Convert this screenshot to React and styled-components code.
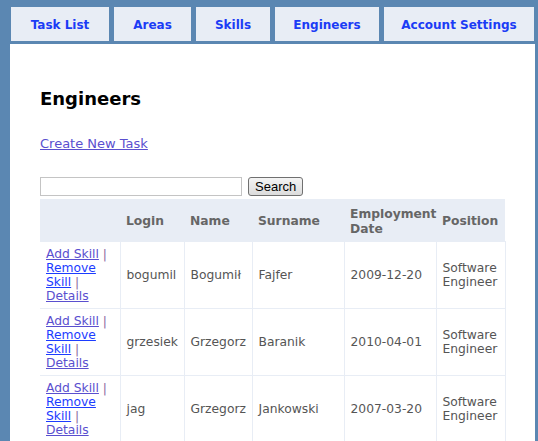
import React from "react";
import styled, {createGlobalStyle} from "styled-components";

const GlobalStyle = createGlobalStyle`
  html, body {
    margin: 0;
    padding: 0;
    background: #5b87b2;
    font-family: "DejaVu Sans", Verdana, sans-serif;
    overflow: hidden;
  }
`;

const tabs = [
    {label: "Task List", width: 98},
    {label: "Areas", width: 77},
    {label: "Skills", width: 74},
    {label: "Engineers", width: 104},
    {label: "Account Settings", width: 150},
];

const columns = [
    {label: "", width: 80},
    {label: "Login", width: 64},
    {label: "Name", width: 68},
    {label: "Surname", width: 92},
    {label: "Employment Date", width: 92},
    {label: "Position", width: 69},
];

const engineers = [
    {login: "bogumil", name: "Bogumił", surname: "Fajfer", date: "2009-12-20"},
    {login: "grzesiek", name: "Grzegorz", surname: "Baranik", date: "2010-04-01"},
    {login: "jag", name: "Grzegorz", surname: "Jankowski", date: "2007-03-20"},
];

const App = () => {
    return (
        <>
            <GlobalStyle/>
            <Nav>
                {tabs.map(t => (
                    <Tab key={t.label} href="#" $width={t.width}>{t.label}</Tab>
                ))}
            </Nav>
            <Content>
                <Title>Engineers</Title>
                <CreateLink href="#">Create New Task</CreateLink>
                <SearchRow>
                    <SearchInput type="text"/>
                    <SearchButton>Search</SearchButton>
                </SearchRow>
                <Table>
                    <colgroup>
                        {columns.map((c, i) => <col key={i} style={{width: c.width}}/>)}
                    </colgroup>
                    <thead>
                    <tr>
                        {columns.map((c, i) => <Th key={i}>{c.label}</Th>)}
                    </tr>
                    </thead>
                    <tbody>
                    {engineers.map(e => (
                        <tr key={e.login}>
                            <Td>
                                <ActionLink href="#" $visited>Add Skill</ActionLink>
                                <Sep> | </Sep>
                                <ActionLink href="#">Remove Skill</ActionLink>
                                <Sep> | </Sep>
                                <ActionLink href="#" $visited>Details</ActionLink>
                            </Td>
                            <Td>{e.login}</Td>
                            <Td>{e.name}</Td>
                            <Td>{e.surname}</Td>
                            <Td>{e.date}</Td>
                            <Td>Software Engineer</Td>
                        </tr>
                    ))}
                    </tbody>
                </Table>
            </Content>
        </>
    )
}

const Nav = styled.nav`
  display: flex;
  gap: 5px;
  padding: 7px 0 0 11px;
`;

const Tab = styled.a`
  display: flex;
  align-items: center;
  justify-content: center;
  flex: none;
  width: ${p => p.$width}px;
  height: 34px;
  padding-top: 2px;
  box-sizing: border-box;
  background: #e8edf5;
  color: #1b3cf5;
  font-size: 12px;
  font-weight: bold;
  text-decoration: none;
  white-space: nowrap;
`;

const Content = styled.div`
  margin: 3px 3px 0 10px;
  background: #fff;
  padding: 44px 30px 0 30px;
  height: 397px;
  box-sizing: border-box;
`;

const Title = styled.h2`
  margin: 0 0 24px;
  font-size: 18px;
  font-weight: bold;
  color: #000;
`;

const CreateLink = styled.a`
  display: inline-block;
  font-size: 13px;
  color: #5a4fcf;
`;

const SearchRow = styled.div`
  display: flex;
  align-items: center;
  gap: 6px;
  margin: 23px 0 2px;
  height: 22px;
`;

const SearchInput = styled.input`
  width: 202px;
  height: 19px;
  box-sizing: border-box;
  border: 1px solid #c4c4c4;
  padding: 0;
`;

const SearchButton = styled.button`
  height: 19px;
  padding: 0 6px;
  font-family: "Liberation Sans", Arial, sans-serif;
  font-size: 13px;
  border: 1px solid #707070;
  border-radius: 3px;
  background: linear-gradient(#f4f4f4, #dcdcdc);
  color: #000;
`;

const Table = styled.table`
  width: 465px;
  table-layout: fixed;
  border-collapse: collapse;
  font-size: 12.3px;
  color: #555;
`;

const Th = styled.th`
  background: #e8edf5;
  color: #666;
  font-weight: bold;
  text-align: left;
  padding: 7px 6px 3px;
  height: 42px;
  box-sizing: border-box;
  line-height: 15px;
`;

const Td = styled.td`
  border: 1px solid #e8edf5;
  padding: 4px 6px;
  height: 67px;
  box-sizing: border-box;
  line-height: 14px;
  &:first-child {
    border-left: none;
  }
`;

const ActionLink = styled.a`
  color: ${p => p.$visited ? "#5a4fcf" : "#1c3cff"};
`;

const Sep = styled.span`
  color: #8a6aa0;
`;

export default App;
